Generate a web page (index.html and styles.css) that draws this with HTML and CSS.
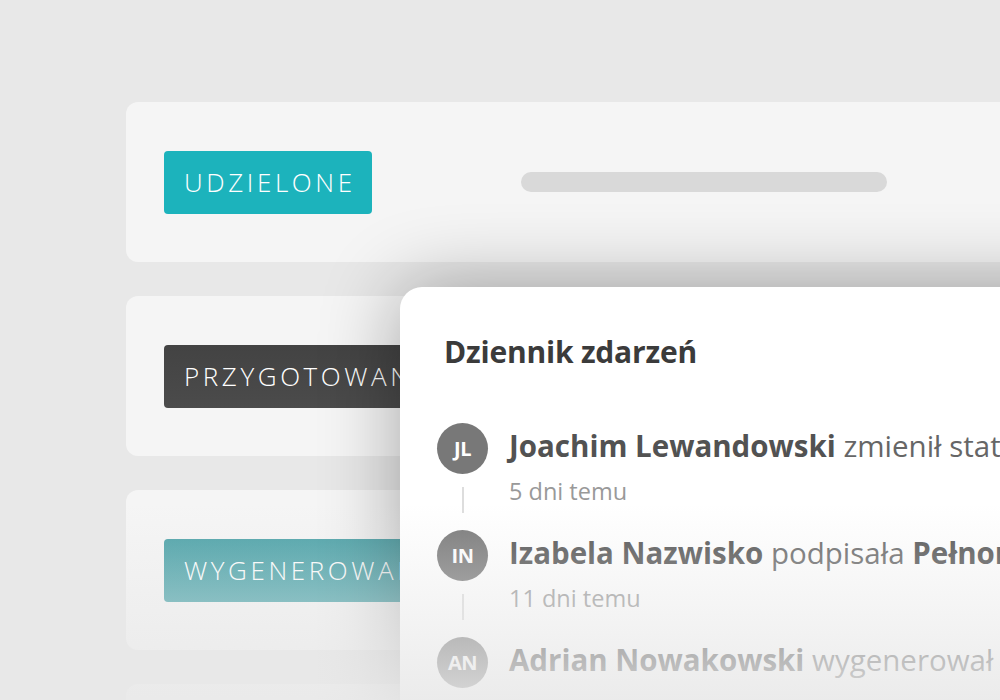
FILE: index.html
```html
<!DOCTYPE html>
<html lang="pl">
<head>
<meta charset="utf-8">
<title>Dziennik zdarzeń</title>
<link rel="stylesheet" href="styles.css">
</head>
<body>
<div class="stage">
  <div class="cards">
    <div class="card">
      <span class="badge badge-teal">UDZIELONE</span>
      <span class="placeholder"></span>
    </div>
    <div class="card">
      <span class="badge badge-dark">PRZYGOTOWANE</span>
    </div>
    <div class="card">
      <span class="badge badge-soft">WYGENEROWANE</span>
    </div>
    <div class="card"></div>
  </div>

  <section class="panel">
    <h2 class="panel-title">Dziennik zdarzeń</h2>
    <ul class="log">
      <li class="log-item">
        <div class="rail">
          <span class="avatar">JL</span>
          <span class="connector"></span>
        </div>
        <div class="entry">
          <p class="entry-text"><b>Joachim Lewandowski</b> zmienił status</p>
          <p class="entry-time">5 dni temu</p>
        </div>
      </li>
      <li class="log-item">
        <div class="rail">
          <span class="avatar">IN</span>
          <span class="connector"></span>
        </div>
        <div class="entry">
          <p class="entry-text"><b>Izabela Nazwisko</b> podpisała <b>Pełnomocnictwo</b></p>
          <p class="entry-time">11 dni temu</p>
        </div>
      </li>
      <li class="log-item">
        <div class="rail">
          <span class="avatar">AN</span>
        </div>
        <div class="entry">
          <p class="entry-text"><b>Adrian Nowakowski</b> wygenerował dokument</p>
        </div>
      </li>
    </ul>
  </section>

  <div class="fade"></div>
</div>
</body>
</html>
```

FILE: styles.css
```css
* { box-sizing: border-box; }

html, body {
  margin: 0;
  padding: 0;
  background: #e8e8e8;
}

body {
  font-family: "Open Sans", "Noto Sans", "DejaVu Sans", sans-serif;
}

.stage {
  position: relative;
  width: 1000px;
  height: 700px;
  overflow: hidden;
  background: #e8e8e8;
}

.cards {
  display: flex;
  flex-direction: column;
  gap: 34px;
  padding: 102px 0 0 126px;
}

.card {
  width: 1000px;
  height: 160px;
  flex: none;
  background: #f5f5f5;
  border-radius: 12px;
  display: flex;
  align-items: center;
  padding-left: 38px;
}

.badge {
  display: inline-flex;
  align-items: center;
  height: 63px;
  padding: 0 16px 0 20px;
  border-radius: 4px;
  color: #ffffff;
  font-size: 26px;
  font-weight: 300;
  letter-spacing: 3.6px;
  white-space: nowrap;
}

.badge-teal { background: #1cb3bc; }
.badge-dark { background: linear-gradient(#434343, #4b4b4b); }
.badge-soft { background: linear-gradient(#469fa5, #42a0a6); }

.placeholder {
  display: block;
  width: 366px;
  height: 20px;
  margin-left: 149px;
  border-radius: 10px;
  background: #d9d9d9;
}

.panel {
  position: absolute;
  left: 400px;
  top: 287px;
  width: 700px;
  height: 500px;
  background: #ffffff;
  border-radius: 22px 0 0 0;
  box-shadow: 0 0 80px rgba(0, 0, 0, 0.33);
  padding: 40px 0 0 37px;
}

.panel-title {
  margin: 0 0 0 7px;
  font-size: 30px;
  line-height: 50px;
  font-weight: 700;
  color: #3b3b3b;
  letter-spacing: -0.2px;
}

.log {
  list-style: none;
  margin: 46px 0 0;
  padding: 0;
}

.log-item {
  display: flex;
  gap: 21px;
}

.rail {
  width: 51px;
  display: flex;
  flex-direction: column;
  align-items: center;
  flex: none;
}

.avatar {
  width: 51px;
  height: 51px;
  border-radius: 50%;
  background: #787878;
  color: #ffffff;
  font-size: 20px;
  font-weight: 700;
  display: flex;
  align-items: center;
  justify-content: center;
  letter-spacing: -0.5px;
}

.connector {
  width: 2px;
  height: 26px;
  margin: 13px 0 17px;
  background: #dddddd;
}

.entry {
  white-space: nowrap;
}

.entry-text {
  margin: 0;
  font-size: 29.5px;
  line-height: 46px;
  color: #666666;
}

.entry-text b {
  font-weight: 700;
  color: #525252;
}

.entry-time {
  margin: 10px 0 0;
  font-size: 23.5px;
  line-height: 24px;
  color: #999999;
}

.fade {
  position: absolute;
  inset: 0;
  pointer-events: none;
  background: linear-gradient(to bottom, rgba(232, 232, 232, 0) 72%, rgba(232, 232, 232, 0.86) 100%);
}
```
